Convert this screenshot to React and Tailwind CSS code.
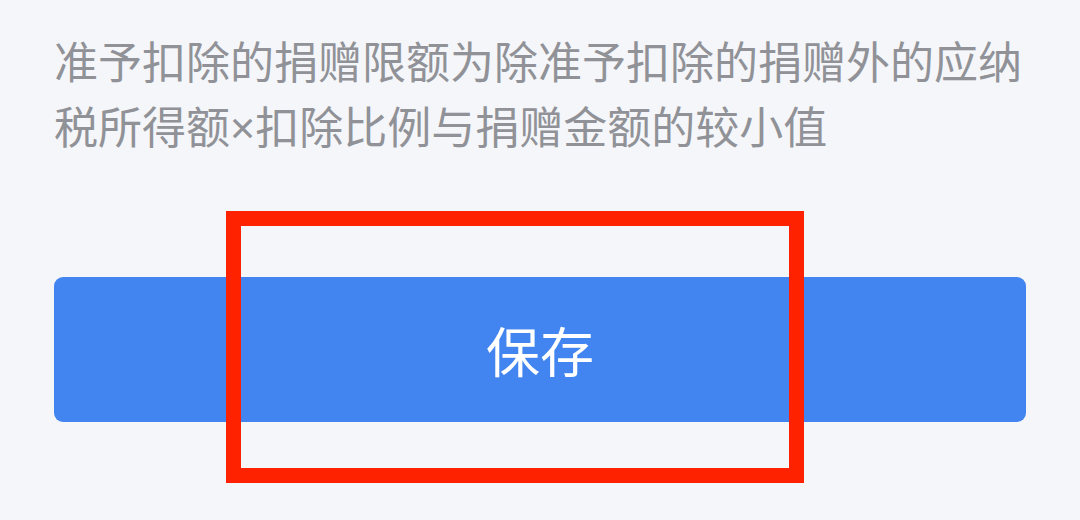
export default function App() {
  return (
    <div
      className="relative w-[1080px] h-[520px] overflow-hidden bg-[#f5f6fa] px-[54px]"
      style={{ fontFamily: '"Noto Sans CJK SC", "Noto Sans", sans-serif' }}
    >
      <div className="pt-[28px] text-[44px] leading-[65px] text-[#909297]">
        <p>准予扣除的捐赠限额为除准予扣除的捐赠外的应纳</p>
        <p className="h-[65px]">
          税所得额<span className="font-['Noto_Sans',sans-serif]">×</span>扣除比例与捐赠金额的较小值
        </p>
      </div>
      <button className="mt-[119px] flex h-[145px] w-full items-center justify-center rounded-[9px] bg-[#4285f0] text-[54px] text-white">
        保存
      </button>
      <div className="absolute left-[226px] top-[211px] h-[272px] w-[578px] border-[15px] border-[#ff2200]" />
    </div>
  );
}
